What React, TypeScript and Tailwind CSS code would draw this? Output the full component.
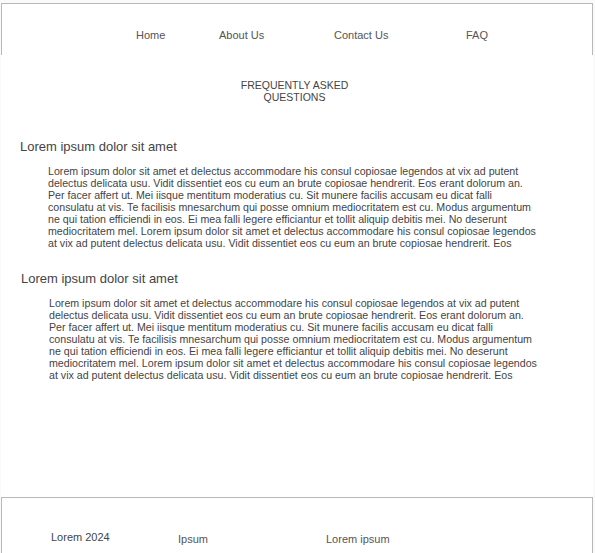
const navItems = [
	{ label: 'Home', w: 'w-[83px]' },
	{ label: 'About Us', w: 'w-[115px]' },
	{ label: 'Contact Us', w: 'w-[132px]' },
	{ label: 'FAQ', w: 'w-auto' },
];

const lorem =
	'Lorem ipsum dolor sit amet et delectus accommodare his consul copiosae legendos at vix ad putent delectus delicata usu. Vidit dissentiet eos cu eum an brute copiosae hendrerit. Eos erant dolorum an. Per facer affert ut. Mei iisque mentitum moderatius cu. Sit munere facilis accusam eu dicat falli consulatu at vis. Te facilisis mnesarchum qui posse omnium mediocritatem est cu. Modus argumentum ne qui tation efficiendi in eos. Ei mea falli legere efficiantur et tollit aliquip debitis mei. No deserunt mediocritatem mel. Lorem ipsum dolor sit amet et delectus accommodare his consul copiosae legendos at vix ad putent delectus delicata usu. Vidit dissentiet eos cu eum an brute copiosae hendrerit. Eos';

function Question({ className }: { className?: string }) {
	return (
		<section className={className}>
			<h2 className="text-[13px] leading-4 text-[#444]">Lorem ipsum dolor sit amet</h2>
			<p className="mt-[10px] ml-[28px] w-[492px] text-[10.65px] leading-3 text-[#444]">{lorem}</p>
		</section>
	);
}

export default function App() {
	return (
		<div className="min-h-[553px] bg-[#fafafa] pt-[3px] font-['Liberation_Sans',Arial,sans-serif]">
			<div className="ml-[1px] w-[592px] bg-white">
				<header className="h-[52px] border-x border-t border-[#b8b8b8]">
					<nav className="flex pl-[134px] pt-[25px] text-[11px] leading-3 text-[#555]">
						{navItems.map((item) => (
							<a key={item.label} className={item.w}>
								{item.label}
							</a>
						))}
					</nav>
				</header>

				<main className="h-[442px] pt-[24px]">
					<h1 className="mx-auto w-[120px] pr-[5px] text-center text-[10.5px] leading-3 text-[#444]">
						FREQUENTLY ASKED QUESTIONS
					</h1>
					<Question className="mt-[36px] pl-[19px]" />
					<Question className="mt-[22px] pl-[20px]" />
				</main>

				<footer className="h-[80px] border-x border-t border-[#b8b8b8]">
					<div className="flex pl-[49px] pt-[33px] text-[11px] leading-3 text-[#555]">
						<span className="w-[127px] text-[#444]">Lorem 2024</span>
						<span className="mt-[2px] w-[148px]">Ipsum</span>
						<span className="mt-[2px]">Lorem ipsum</span>
					</div>
				</footer>
			</div>
		</div>
	);
}
